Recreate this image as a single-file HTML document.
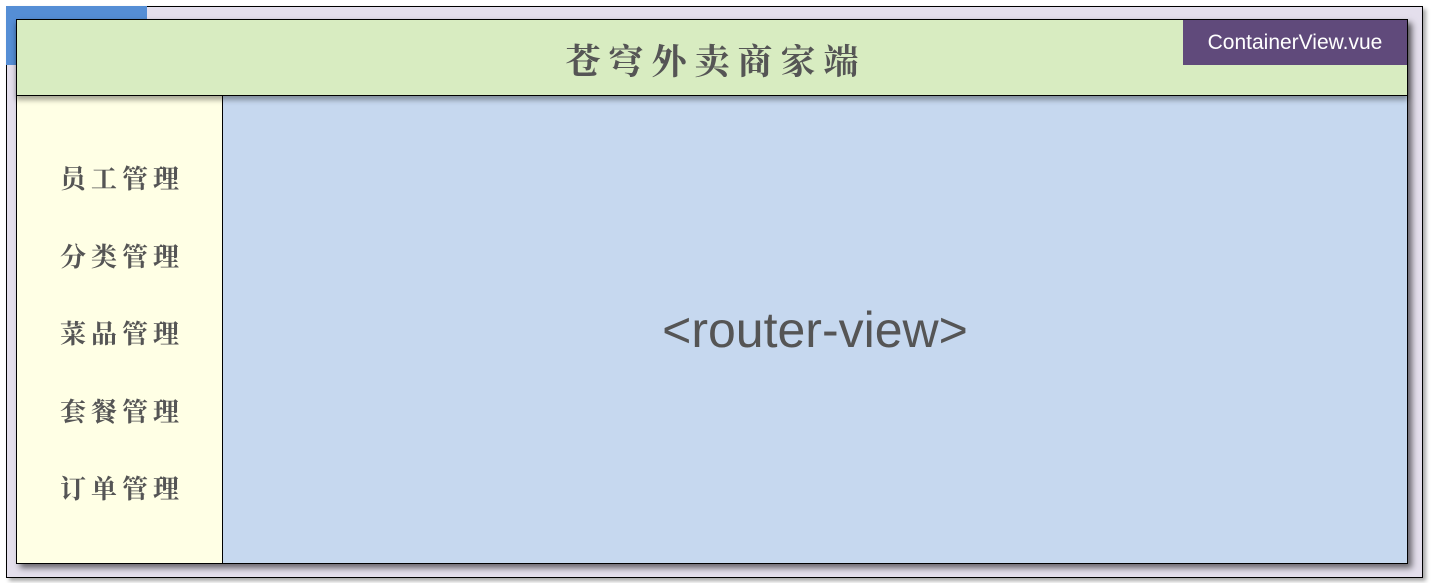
<!DOCTYPE html><html><head><meta charset="utf-8"><style>
body{margin:0;width:1453px;height:583px;background:#fff;position:relative;overflow:hidden;font-family:"Liberation Sans","Noto Sans CJK SC",sans-serif}
div{position:absolute;box-sizing:border-box}
.cn{color:#555;font-weight:bold;font-family:"Noto Serif CJK SC","Noto Sans CJK SC",serif}
</style></head><body>
<div style="left:6px;top:6px;width:1417px;height:572px;background:#e4dfec;border:1px solid #000;box-shadow:3px 3px 4px rgba(0,0,0,.35)"></div>
<div style="left:6px;top:6px;width:141px;height:59px;background:#558ed5"></div>
<div style="left:16px;top:19px;width:1392px;height:545px;border:1px solid #000;box-shadow:4px 4px 6px rgba(0,0,0,.55);background:#c6d8ef"></div>
<div style="left:17px;top:95px;width:206px;height:468px;background:#ffffe5;border-right:1px solid #000"></div>
<div style="left:16px;top:19px;width:1392px;height:77px;background:#d8ecc1;border:1px solid #000;box-shadow:0 4px 5px rgba(0,0,0,.35)"></div>
<div class="cn" style="left:20px;top:38px;width:1392px;text-align:center;font-size:35px;letter-spacing:8px;line-height:44px">苍穹外卖商家端</div>
<div style="left:1183px;top:20px;width:224px;height:45px;background:#604a7b;color:#fff;font-size:21px;text-align:center;line-height:45px">ContainerView.vue</div>
<div class="cn" style="left:19px;top:139px;width:206px;text-align:center;font-size:26px;letter-spacing:5px;line-height:77.5px">员工管理<br>分类管理<br>菜品管理<br>套餐管理<br>订单管理</div>
<div style="left:223px;top:300px;width:1184px;text-align:center;font-size:50px;color:#555;line-height:60px">&lt;router-view&gt;</div>
</body></html>
